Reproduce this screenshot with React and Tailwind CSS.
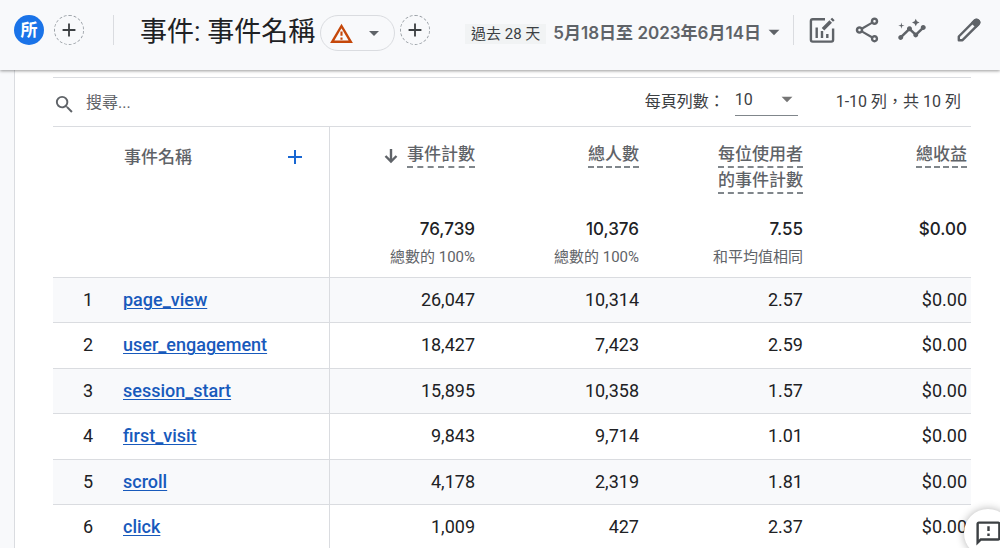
import React, { useState } from 'react';
import {
  MdAdd, MdArrowDropDown, MdOutlineFeedback, MdOutlineInsights, MdOutlineShare, MdSearch
} from 'react-icons/md';

const columns = [
  { lines: ['事件計數'], total: '76,739', note: '總數的 100%', sorted: true },
  { lines: ['總人數'], total: '10,376', note: '總數的 100%' },
  { lines: ['每位使用者', '的事件計數'], total: '7.55', note: '和平均值相同' },
  { lines: ['總收益'], total: '$0.00', note: '' },
];

const rows = [
  { name: 'page_view', values: ['26,047', '10,314', '2.57', '$0.00'] },
  { name: 'user_engagement', values: ['18,427', '7,423', '2.59', '$0.00'] },
  { name: 'session_start', values: ['15,895', '10,358', '1.57', '$0.00'] },
  { name: 'first_visit', values: ['9,843', '9,714', '1.01', '$0.00'] },
  { name: 'scroll', values: ['4,178', '2,319', '1.81', '$0.00'] },
  { name: 'click', values: ['1,009', '427', '2.37', '$0.00'] },
];

function ChartEditIcon() {
  return (
    <svg width="30" height="30" viewBox="0 0 30 30" fill="none" stroke="currentColor" aria-hidden="true">
      <path d="M18 4.2H5.7a1.8 1.8 0 0 0-1.8 1.8v18.8a1.8 1.8 0 0 0 1.8 1.8h18.6a1.8 1.8 0 0 0 1.800-1.800V13.500" strokeWidth="2.4" />
      <path d="M9.7 12.5v10.500M15 16v7M20.300 19v4" strokeWidth="2.4" />
      <path d="M16 14.3l7.700-7.700M24.700 5.600l1.700-1.700" strokeWidth="3.6" />
    </svg>
  );
}

function PencilIcon() {
  return (
    <svg width="30" height="30" viewBox="0 0 30 30" fill="none" stroke="currentColor" strokeLinejoin="round" aria-hidden="true">
      <path d="M4.800 25.200v-3.700L20.600 5.700a2.600 2.600 0 0 1 3.700 3.700L8.500 25.200z" strokeWidth="2.400" />
      <path d="M18.500 7.800l2.100-2.100a2.600 2.600 0 0 1 3.700 3.700l-2.100 2.100z" fill="currentColor" strokeWidth="2.400" />
    </svg>
  );
}

function WarningIcon() {
  return (
    <svg width="25" height="25" viewBox="0 0 25 25" fill="none" stroke="currentColor" aria-hidden="true">
      <path d="M12.500 5L21.800 20.800H3.200z" strokeWidth="2.400" />
      <path d="M12.500 10.500v4.300M12.500 16.600v2.200" strokeWidth="2.100" />
    </svg>
  );
}

function SortArrow() {
  return (
    <svg width="14" height="16" viewBox="0 0 14 16" fill="none" stroke="currentColor" strokeWidth="2.4" className="mt-[6px]" aria-hidden="true">
      <path d="M7 1v12.500M1.500 8L7 13.500 12.500 8" />
    </svg>
  );
}

function AddCircle({ label }) {
  return (
    <button aria-label={label}
      className="flex size-[30px] shrink-0 items-center justify-center rounded-full border border-dashed border-[#9aa0a6] text-[#3c4043]">
      <MdAdd size={22} />
    </button>
  );
}

function Header() {
  return (
    <header className="relative z-10 flex h-[70px] shrink-0 items-start bg-[#f8f9fb] pr-4 pl-[14px] text-[#5f6368] shadow-[0_1px_3px_rgba(0,0,0,0.4)]">
      <div className="flex h-[60px] flex-1 items-center">
        <button className="flex size-[30px] items-center justify-center rounded-full bg-[#1a73e8] text-[17px] leading-none font-bold text-white">所</button>
        <div className="ml-[10px]"><AddCircle label="新增比較" /></div>
        <div className="ml-[29px] h-[30px] w-px bg-[#dadce0]" />
        <h1 className="mt-1 ml-[26px] text-[27px] leading-8 whitespace-nowrap text-[#202124]">事件: 事件名稱</h1>
        <button aria-label="警告"
          className="mt-[6px] ml-[5px] flex h-9 w-[75px] shrink-0 items-center justify-between rounded-full border border-[#dadce0] px-2 text-[#c5470a]">
          <WarningIcon />
          <MdArrowDropDown size={24} className="text-[#5f6368]" />
        </button>
        <div className="ml-[5px]"><AddCircle label="新增篩選器" /></div>
      </div>
      <div className="flex h-[60px] items-center">
        <button className="flex items-center whitespace-nowrap">
          <span className="mt-2 bg-[#f1f3f4] px-[6px] text-[15px] leading-5 text-[#3c4043]">過去 28 天</span>
          <span className="mt-[5px] ml-[7px] font-[Inter,'Noto_Sans_CJK_TC',sans-serif] text-[17px] leading-6 font-semibold">5月18日至 2023年6月14日</span>
          <MdArrowDropDown size={26} className="mt-1" />
        </button>
        <div className="ml-[6px] h-[30px] w-px bg-[#dadce0]" />
        <div className="ml-[13px] flex items-center gap-[15px]">
          <button aria-label="編輯比較項目"><ChartEditIcon /></button>
          <button aria-label="分享"><MdOutlineShare size={30} /></button>
          <button aria-label="深入分析"><MdOutlineInsights size={30} /></button>
          <button aria-label="自訂報表" className="ml-3"><PencilIcon /></button>
        </div>
      </div>
    </header>
  );
}

function Toolbar() {
  const [search, setSearch] = useState('');
  const [pageSize, setPageSize] = useState('10');

  return (
    <div className="flex h-[50px] items-center border-y border-[#dadce0] text-[#3c4043]">
      <label htmlFor="search" className="mt-1 flex w-[33px] shrink-0 items-center" aria-label="搜尋">
        <MdSearch size={23} className="text-[#5f6368]" />
      </label>
      <input id="search" value={search} onChange={(e) => setSearch(e.target.value)} placeholder="搜尋..."
        className="mt-[2px] min-w-0 flex-1 text-base outline-none placeholder:text-[#5f6368]" />
      <label htmlFor="page-size" className="text-base whitespace-nowrap">每頁列數：</label>
      <div className="relative -mt-1 ml-[10px]">
        <select id="page-size" value={pageSize} onChange={(e) => setPageSize(e.target.value)}
          className="h-8 w-[63px] appearance-none border-b border-[#80868b] text-base outline-none">
          <option>10</option>
          <option>25</option>
          <option>50</option>
        </select>
        <MdArrowDropDown size={26} className="pointer-events-none absolute top-[2px] -right-[2px] text-[#757575]" />
      </div>
      <span className="mr-[10px] ml-[38px] text-base whitespace-nowrap">1-10 列，共 10 列</span>
    </div>
  );
}

function EventTable() {
  return (
    <table className="w-full table-fixed border-collapse text-[#202124]">
      <colgroup>
        <col className="w-[70px]" />
        <col className="w-[206px]" />
        <col className="w-[150px]" />
        <col />
        <col />
        <col />
      </colgroup>
      <thead className="text-[17px] leading-6">
        <tr className="h-[150px] border-b border-[#dadce0] align-top text-[#5f6368]">
          <th colSpan={2} className="border-r border-[#dadce0] pt-[18px] pr-[22px] pl-[71px] font-medium">
            <div className="flex items-center justify-between">
              事件名稱
              <button aria-label="新增次要維度" className="text-[#1967d2]"><MdAdd size={24} /></button>
            </div>
          </th>
          {columns.map((col) => (
            <th key={col.lines[0]} className="pt-[15px] pr-1 text-right font-medium">
              <div className="flex h-[75px] items-start justify-end gap-[9px]">
                {col.sorted && <SortArrow />}
                <div>
                  {col.lines.map((line) => (
                    <div key={line} className="h-[26px] border-b-2 border-dashed border-[#80868b] leading-6 whitespace-nowrap">
                      {line}
                    </div>
                  ))}
                </div>
              </div>
              <div className="font-[Inter,sans-serif] leading-6 text-[#202124]">{col.total}</div>
              <div className="mt-1 text-[15px] leading-6 font-normal whitespace-nowrap">{col.note}</div>
            </th>
          ))}
        </tr>
      </thead>
      <tbody className="text-lg leading-6">
        {rows.map((row, i) => (
          <tr key={row.name} className="h-[45px] border-b border-[#dadce0] odd:bg-[#f8f9fb] even:h-[46px]">
            <td className="text-center">{i + 1}</td>
            <td className="border-r border-[#dadce0]">
              <a href="#" className="font-medium text-[#185abc] underline decoration-1 underline-offset-2">{row.name}</a>
            </td>
            {row.values.map((value, j) => (
              <td key={j} className="pr-1 text-right">{value}</td>
            ))}
          </tr>
        ))}
      </tbody>
    </table>
  );
}

export default function App() {
  return (
    <div className="flex h-screen flex-col overflow-hidden bg-[#f8f9fb] font-[Roboto,'Noto_Sans_CJK_TC',sans-serif]">
      <Header />
      <main className="ml-[14px] min-h-0 flex-1 overflow-hidden border-l border-[#dadce0] bg-white pt-[7px] pr-[29px] pl-[38px]">
        <Toolbar />
        <EventTable />
      </main>
      <button aria-label="提供意見"
        className="fixed -right-3 -bottom-[9px] flex size-12 items-center justify-center rounded-full bg-white text-[#3c4043] shadow-[0_0_8px_rgba(0,0,0,0.3)]">
        <MdOutlineFeedback size={29} />
      </button>
    </div>
  );
}
